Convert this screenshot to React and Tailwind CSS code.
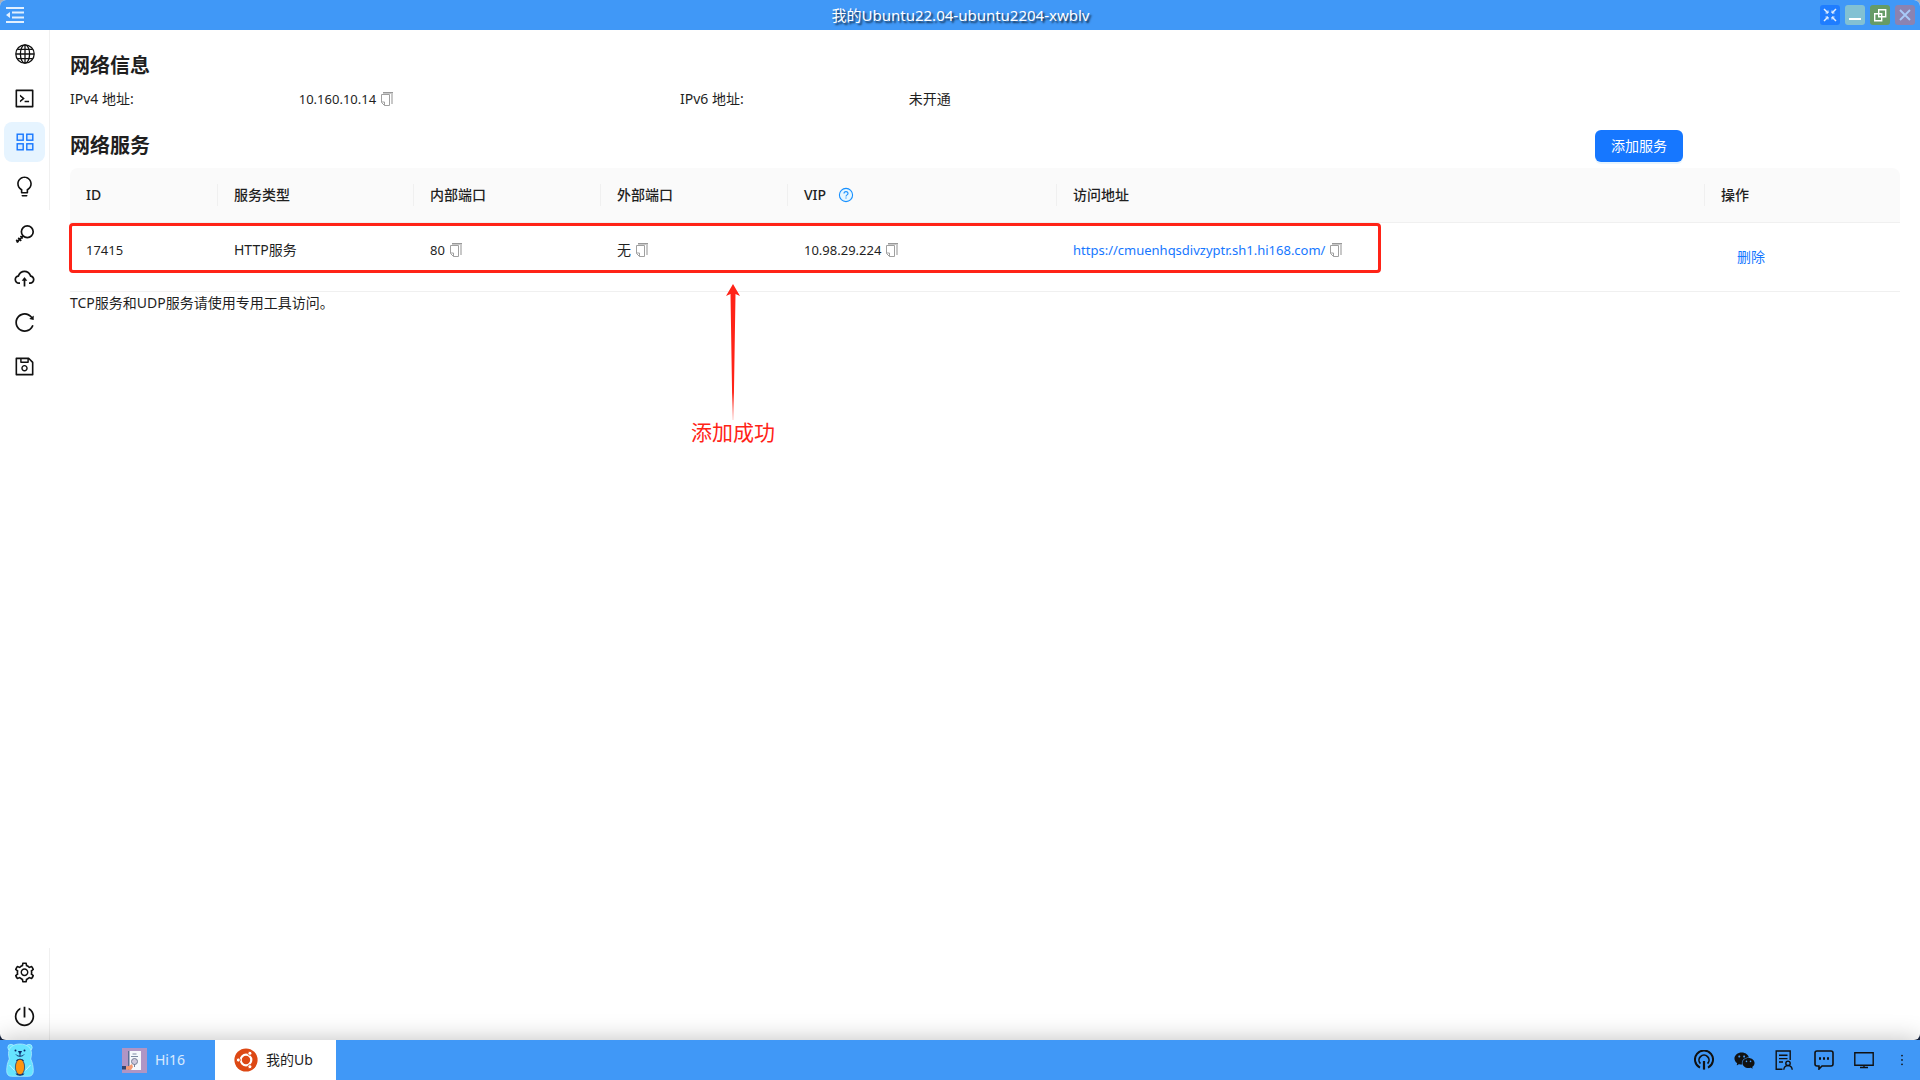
import React, { useState } from "react";
import {
  AiOutlineCode,
  AiOutlineBulb,
  AiOutlineCloudUpload,
  AiOutlineReload,
  AiOutlineSave,
  AiOutlineSetting,
  AiOutlinePoweroff,
  AiFillWechat,
  AiOutlineMore,
} from "react-icons/ai";

const GlobeIcon = () => (
  <svg viewBox="0 0 20 20" className="size-5" fill="none" stroke="currentColor" strokeWidth="1.3">
    <circle cx="10" cy="10" r="9.2" />
    <ellipse cx="10" cy="10" rx="4.6" ry="9.2" />
    <path d="M10 1v18M1 10h18M2.5 5.3h15M2.5 14.7h15" />
  </svg>
);

const GridIcon = () => (
  <svg viewBox="0 0 20 20" className="size-5" fill="#d6eaff" stroke="currentColor" strokeWidth="1.4">
    <rect x="2.2" y="2.2" width="6" height="6" />
    <rect x="11.8" y="2.2" width="6" height="6" />
    <rect x="2.2" y="11.8" width="6" height="6" />
    <rect x="11.8" y="11.8" width="6" height="6" />
  </svg>
);

const KeyIcon = () => (
  <svg viewBox="0 0 20 20" className="size-5" fill="none" stroke="currentColor" strokeWidth="1.7">
    <circle cx="12.3" cy="7.7" r="5.9" />
    <path d="M8.2 11.8L1.6 18.4M3.2 13.8l3 3M1.2 15.8l2.4 2.4M5.4 12l2.4 2.4" />
  </svg>
);

const CopyIcon = () => (
  <svg viewBox="0 0 12 14" className="h-3.5 w-3" fill="none">
    <path d="M2 0h10v12h-2V2H2z" fill="#c8c8c8" />
    <path d="M2 .5h10" stroke="#999" />
    <path d="M.5 2.5h8v11h-5l-3-3z" fill="#fff" stroke="#a0a0a0" />
    <path d="M.5 10h3v3.5" stroke="#a0a0a0" />
  </svg>
);

const HelpIcon = () => (
  <svg viewBox="0 0 16 16" className="size-4" fill="none" stroke="#1890ff">
    <circle cx="8" cy="8" r="6.6" fill="#e6f7ff" strokeWidth="1.1" />
    <path d="M6 6.6c0-2.6 4-2.6 4 0 0 1.3-2 1.3-2 2.8" strokeWidth="1.1" />
    <path d="M7.4 11h1.2" strokeWidth="1.2" />
  </svg>
);

const CollapseIcon = () => (
  <svg viewBox="0 0 18 16" className="h-4 w-[18px]" fill="#fff">
    <path d="M0 0h18v2H0zM6 4.500h12v2H6zM6 9.500h12v2H6zM0 14h18v2H0zM0 8l4-3v6z" opacity=".85" />
  </svg>
);

const BroadcastIcon = () => (
  <svg viewBox="0 0 20 20" className="size-5" fill="none" stroke="currentColor" strokeWidth="2">
    <path d="M6 17.6a9 9 0 1 1 8 0" />
    <path d="M6.4 13.6a5 5 0 1 1 7.2 0" strokeWidth="1.7" />
    <path d="M10 11v8.6" strokeWidth="2.2" />
  </svg>
);

const AuditIcon = () => (
  <svg viewBox="0 0 20 20" className="size-5" fill="none" stroke="currentColor" strokeWidth="1.4">
    <path d="M8.5 19.200H2.200V1h14v9" />
    <path d="M5 5.200h8.500M5 8.600h8.500M5 12h4" />
    <circle cx="14" cy="13.300" r="2.200" />
    <path d="M9.800 19.800c.3-5.600 8.100-5.600 8.400 0" />
  </svg>
);

const MessageIcon = () => (
  <svg viewBox="0 0 20 20" className="size-5" fill="none" stroke="currentColor" strokeWidth="1.600">
    <path d="M3 1h14q2 0 2 2v11q0 2-2 2H8l-3 3v-3H3q-2 0-2-2V3q0-2 2-2z" />
    <path d="M5 8.500h2M9 8.500h2M13 8.500h2" strokeWidth="2.400" />
  </svg>
);

const DesktopIcon = () => (
  <svg viewBox="0 0 20 20" className="size-5" fill="none" stroke="currentColor" strokeWidth="1.400">
    <path d="M.8 2.800h18.400v12.400H.8zM10 15v2.500M6 17.500h8" />
  </svg>
);

const BearLogo = () => (
  <svg viewBox="0 0 28 34" className="h-[34px] w-7">
    <g fill="#66e3ff" stroke="#b9f2ff" strokeWidth=".7">
      <circle cx="5" cy="4.500" r="3.200" />
      <circle cx="23" cy="4.500" r="3.200" />
      <path d="M14 1C6.500 1 2.500 5 2.500 10.500c0 2.500.5 4 .8 5.500C1.500 19.500.7 23.500.7 27.500c0 4 1.800 5.800 5 5.800h16.600c3.200 0 5-1.800 5-5.800 0-4-.8-8-2.600-11.500.3-1.500.8-3 .8-5.500C25.500 5 21.500 1 14 1z" />
    </g>
    <circle cx="9.5" cy="7.500" r="1" fill="#0b2a6b" />
    <circle cx="18.500" cy="7.500" r="1" fill="#0b2a6b" />
    <path d="M12.500 8.500h3L14 10.500z" fill="#0b2a6b" stroke="#0b2a6b" />
    <path d="M14 10v3M10 11.500c1.500 2.300 6.500 2.300 8 0" fill="none" stroke="#0b2a6b" />
    <path d="M3.500 22l5 5.500M24.500 22l-5 5.500" stroke="#c8f5ff" />
    <path d="M10 18c1-3 7-3 8 0zM9.500 30.500c1.500 3 7.500 3 9 0z" fill="#12306b" />
    <ellipse cx="14" cy="24" rx="4.600" ry="7.800" fill="#ff950f" stroke="#12306b" strokeWidth=".7" />
  </svg>
);

const BookLogo = () => (
  <svg viewBox="0 0 25 25" className="size-[25px]">
    <path d="M0 0h25v25H0z" fill="#b095c4" />
    <path d="M6 3h13v19H6z" fill="#f6f8fc" />
    <path d="M6 3h1.500v19H6z" fill="#5b6c94" />
    <path d="M10.500 6h4M9 8.500h7" stroke="#7d8ba3" />
    <circle cx="12.500" cy="13.500" r="3" fill="#cfc8dc" stroke="#777f96" />
    <path d="M12.500 16v3" stroke="#777f96" />
    <path d="M3 18.500l4-.5 3-2 1 3-2 3-6-.500z" fill="#f59a72" />
    <path d="M0 18h4v3.500H0z" fill="#33466e" />
  </svg>
);

const UbuntuLogo = () => (
  <svg viewBox="0 0 24 24" className="size-6">
    <circle cx="12" cy="12" r="11.600" fill="#dd4814" />
    <circle cx="12" cy="12" r="5.300" fill="none" stroke="#fff" strokeWidth="2.200" />
    <g fill="#fff" stroke="#dd4814" strokeWidth=".9">
      <circle cx="4.300" cy="12" r="2" />
      <circle cx="15.900" cy="5.300" r="2" />
      <circle cx="15.900" cy="18.700" r="2" />
    </g>
  </svg>
);

const mainMenu = [
  { key: "network", label: "网络", icon: <GlobeIcon /> },
  { key: "terminal", label: "终端", icon: <AiOutlineCode size={23} /> },
  { key: "services", label: "服务", icon: <GridIcon /> },
  { key: "tips", label: "提示", icon: <AiOutlineBulb size={23} /> },
];

const toolMenu = [
  { key: "key", label: "密钥", icon: <KeyIcon /> },
  { key: "upload", label: "上传", icon: <AiOutlineCloudUpload size={23} /> },
  { key: "reload", label: "刷新", icon: <AiOutlineReload size={23} /> },
  { key: "save", label: "保存", icon: <AiOutlineSave size={23} /> },
];

const systemMenu = [
  { key: "setting", label: "设置", icon: <AiOutlineSetting size={23} /> },
  { key: "power", label: "电源", icon: <AiOutlinePoweroff size={23} /> },
];

const services = [
  {
    id: 17415,
    type: "HTTP服务",
    innerPort: "80",
    outerPort: "无",
    vip: "10.98.29.224",
    url: "https://cmuenhqsdivzyptr.sh1.hi168.com/",
  },
];

function Menu({ items, active, onSelect, className }) {
  return (
    <ul className={`flex w-[50px] flex-col gap-1 py-1 pl-1 pr-1 ${className}`}>
      {items.map((item) => (
        <li key={item.key}>
          <button
            aria-label={item.label}
            onClick={() => onSelect(item.key)}
            className={`flex h-10 w-[41px] items-center justify-center rounded-lg ${
              active === item.key ? "bg-[#e6f4ff] text-[#1677ff]" : "text-[#111]"
            }`}
          >
            {item.icon}
          </button>
        </li>
      ))}
    </ul>
  );
}

function CopyText({ children }) {
  return (
    <span className="inline-flex items-center gap-[5px]">
      {children}
      <button aria-label="复制">
        <CopyIcon />
      </button>
    </span>
  );
}

function HeadCell({ children, last }) {
  return (
    <th className="h-[55px] p-0 text-left font-medium">
      <div className={`flex h-[22px] items-center px-4 ${last ? "" : "border-r border-[#f0f0f0]"}`}>{children}</div>
    </th>
  );
}

function TitleBar() {
  return (
    <header className="flex h-[30px] shrink-0 items-center bg-[#4098f7] pr-[5px] pl-1.5">
      <div className="flex flex-1">
        <button aria-label="收起菜单">
          <CollapseIcon />
        </button>
      </div>
      <h1 className="text-[15px] text-white [text-shadow:2px_2px_2px_rgba(0,0,0,0.7)]">
        我的Ubuntu22.04-ubuntu2204-xwblv
      </h1>
      <div className="flex flex-1 justify-end gap-[5px]">
        <button aria-label="全屏" className="size-5 rounded-[3px] bg-[#1f7dff]">
          <svg viewBox="0 0 20 20" fill="none" stroke="#e3f0ff" strokeWidth="1.5">
            <path d="M4 4l4 4M16 4l-4 4M4 16l4-4M16 16l-4-4" />
            <path d="M5.500 8H8V5.500M14.500 8H12V5.500M5.500 12H8v2.500M14.500 12H12v2.500" strokeWidth="1" />
          </svg>
        </button>
        <button aria-label="最小化" className="size-5 rounded-[3px] bg-[#82c1d3]">
          <svg viewBox="0 0 20 20" stroke="#fff" strokeWidth="2">
            <path d="M4 14h12" />
          </svg>
        </button>
        <button aria-label="还原" className="size-5 rounded-[3px] bg-[#669b66]">
          <svg viewBox="0 0 20 20" fill="none" stroke="#fff" strokeWidth="1.4">
            <path d="M8.700 4.700h7v7h-7zM4.700 8.700h7v7h-7z" />
          </svg>
        </button>
        <button aria-label="关闭" className="size-5 rounded-[3px] bg-[#8b83b1]">
          <svg viewBox="0 0 20 20" stroke="#a9cbf8" strokeWidth="1.800">
            <path d="M5 5l10 10M15 5L5 15" />
          </svg>
        </button>
      </div>
    </header>
  );
}

function NetworkInfo() {
  return (
    <section>
      <h2 className="text-xl leading-7 font-bold">网络信息</h2>
      <dl className="mt-1.5 grid grid-cols-3 leading-[26px]">
        <div className="flex">
          <dt className="w-3/8">IPv4 地址:</dt>
          <dd className="text-[13px]">
            <CopyText>10.160.10.14</CopyText>
          </dd>
        </div>
        <div className="flex">
          <dt className="w-3/8">IPv6 地址:</dt>
          <dd>未开通</dd>
        </div>
      </dl>
    </section>
  );
}

function ServiceTable() {
  return (
    <div className="relative">
      <table className="w-full table-fixed border-separate border-spacing-0">
        <colgroup>
          <col className="w-[148px]" />
          <col className="w-[196px]" />
          <col className="w-[187px]" />
          <col className="w-[187px]" />
          <col className="w-[269px]" />
          <col />
          <col className="w-[195px]" />
        </colgroup>
        <thead className="[&_th]:border-b [&_th]:border-[#f0f0f0] [&_th]:bg-[#fafafa] [&_th:first-child]:rounded-tl-lg [&_th:last-child]:rounded-tr-lg">
          <tr>
            <HeadCell>ID</HeadCell>
            <HeadCell>服务类型</HeadCell>
            <HeadCell>内部端口</HeadCell>
            <HeadCell>外部端口</HeadCell>
            <HeadCell>
              VIP
              <button aria-label="VIP 说明" className="ml-3">
                <HelpIcon />
              </button>
            </HeadCell>
            <HeadCell>访问地址</HeadCell>
            <HeadCell last>操作</HeadCell>
          </tr>
        </thead>
        <tbody className="[&_td]:border-b [&_td]:border-[#f0f0f0] [&_td]:p-4 [&_td]:align-top">
          {services.map((s) => (
            <tr key={s.id}>
              <td className="text-[13px]">{s.id}</td>
              <td>{s.type}</td>
              <td className="text-[13px]">
                <CopyText>{s.innerPort}</CopyText>
              </td>
              <td>
                <CopyText>{s.outerPort}</CopyText>
              </td>
              <td className="text-[13px]">
                <CopyText>{s.vip}</CopyText>
              </td>
              <td className="text-[13px]">
                <CopyText>
                  <a href={s.url} className="text-[#1677ff]">{s.url}</a>
                </CopyText>
              </td>
              <td>
                <button className="h-9 px-4 text-[#1677ff]">删除</button>
              </td>
            </tr>
          ))}
        </tbody>
      </table>

      {/* Highlight on the new row, with its arrow and note */}
      <div className="pointer-events-none absolute top-[55px] -left-px h-[50px] w-[1312px] rounded-sm border-[3px] border-[#ff2317]" />
      <div className="pointer-events-none absolute top-[116px] left-[621px] flex w-[84px] flex-col items-center text-[#ff2317]">
        <svg viewBox="0 0 14 136" className="h-[136px] w-3.5">
          <defs>
            <linearGradient id="tail" x1="0" y1="0" x2="0" y2="1">
              <stop offset="0.8" stopColor="#ff2317" />
              <stop offset="1" stopColor="#ff2317" stopOpacity="0.2" />
            </linearGradient>
          </defs>
          <path d="M7 0l7 12-4.500-2L7.500 136h-1L4.500 10 0 12z" fill="url(#tail)" />
        </svg>
        <span className="text-[21px] leading-6 whitespace-nowrap">添加成功</span>
      </div>
    </div>
  );
}

function Taskbar() {
  return (
    <footer className="relative z-10 flex h-10 shrink-0 items-center bg-[#4098f7] shadow-[0_0_24px_rgba(0,0,0,0.25)]">
      <button aria-label="开始" className="ml-1.5">
        <BearLogo />
      </button>
      <button className="ml-[61px] flex h-10 w-[120px] items-center gap-2 pl-[27px] text-white/80">
        <BookLogo />
        <span>Hi16</span>
      </button>
      <button className="flex h-10 w-[121px] items-center gap-2 bg-white pl-[19px]">
        <UbuntuLogo />
        <span>我的Ub</span>
      </button>
      <div className="ml-auto flex items-center gap-5 pr-2.5 text-[#111]">
        <button aria-label="广播"><BroadcastIcon /></button>
        <button aria-label="微信" className="flex w-5 justify-center"><AiFillWechat size={23} className="shrink-0" /></button>
        <button aria-label="审计"><AuditIcon /></button>
        <button aria-label="消息"><MessageIcon /></button>
        <button aria-label="桌面"><DesktopIcon /></button>
        <button aria-label="更多"><AiOutlineMore size={16} /></button>
      </div>
    </footer>
  );
}

export default function App() {
  const [active, setActive] = useState("services");

  return (
    <div className="flex min-h-screen flex-col bg-linear-to-b from-[#a9b0ba] to-[#14213d] font-['Noto_Sans','Noto_Sans_CJK_SC',sans-serif] text-sm leading-[22px] text-[#1f1f1f]">
      <div className="flex grow flex-col overflow-hidden rounded-md bg-white">
        <TitleBar />
        <div className="flex grow">
          <nav className="flex w-[50px] shrink-0 flex-col">
            <Menu items={mainMenu} active={active} onSelect={setActive} className="border-r border-[#f0f0f0]" />
            <Menu items={toolMenu} active={active} onSelect={setActive} className="" />
            <Menu items={systemMenu} active={active} onSelect={setActive} className="mt-auto border-r border-[#f0f0f0]" />
          </nav>
          <main className="min-w-0 flex-1 px-5 pt-[22px]">
            <NetworkInfo />
            <section className="mt-[18px]">
              <div className="flex h-8 items-center">
                <h2 className="w-5/6 text-xl leading-7 font-bold">网络服务</h2>
                <button className="h-8 rounded-md bg-[#1677ff] px-4 text-white shadow-[0_2px_0_rgba(5,145,255,0.1)]">
                  添加服务
                </button>
              </div>
              <div className="mt-1.5">
                <ServiceTable />
              </div>
              <p>TCP服务和UDP服务请使用专用工具访问。</p>
            </section>
          </main>
        </div>
      </div>
      <Taskbar />
    </div>
  );
}
